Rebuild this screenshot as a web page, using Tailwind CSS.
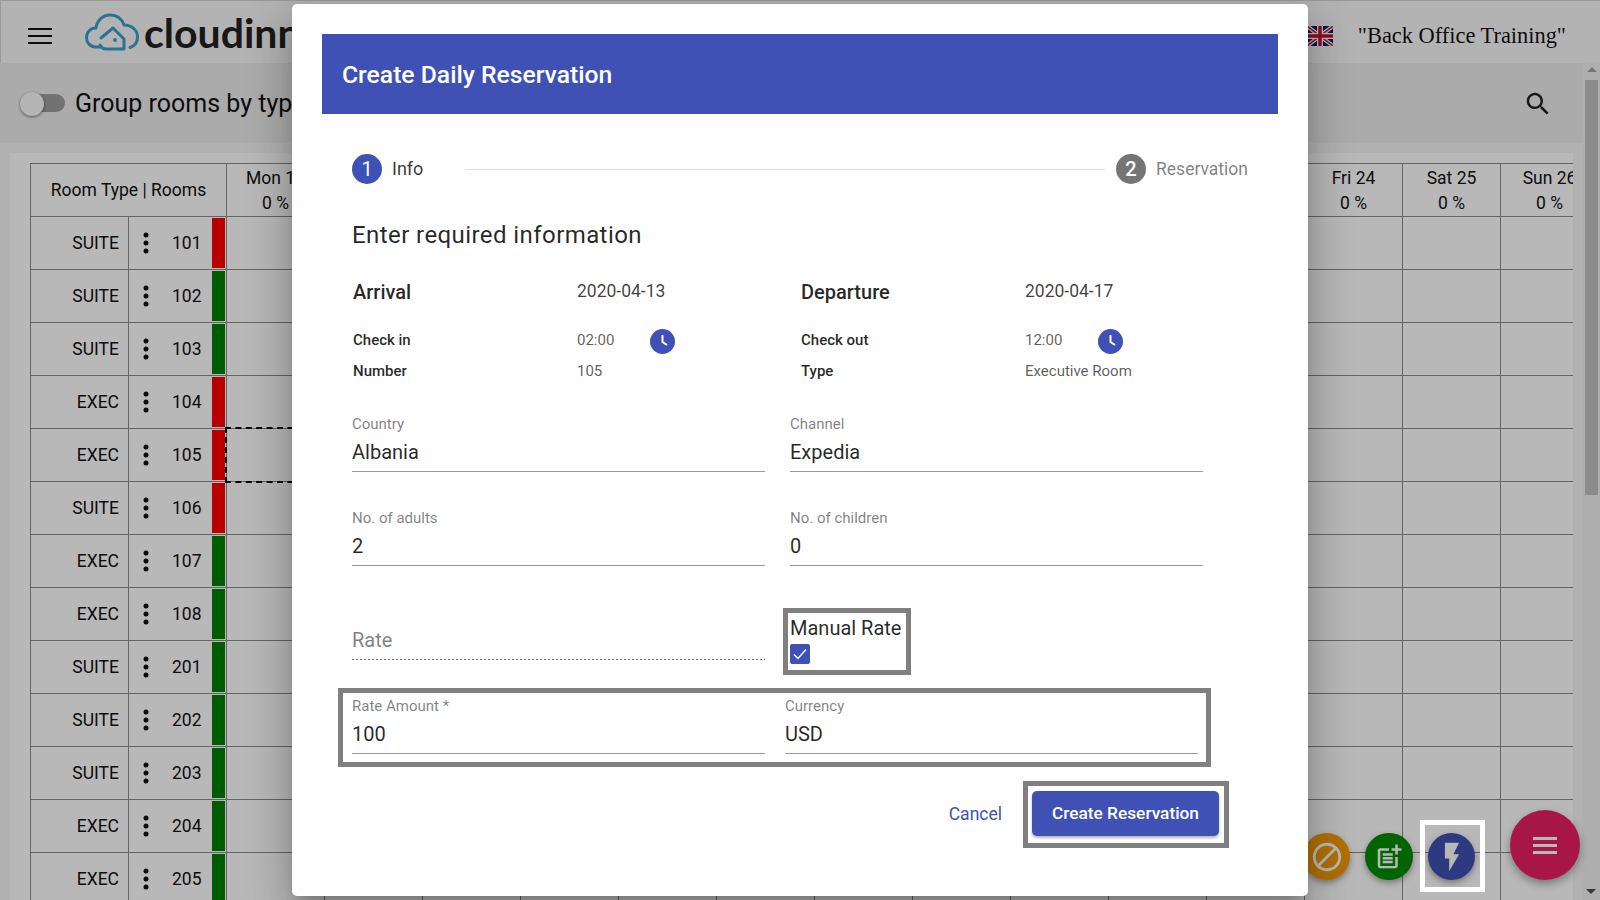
<!DOCTYPE html>
<html lang="en">
<head>
<meta charset="UTF-8">
<title>Cloudinn - Create Daily Reservation</title>
<script src="https://cdn.jsdelivr.net/npm/@tailwindcss/browser@4"></script>
</head>
<body class="relative w-[1600px] h-[900px] overflow-hidden bg-[#f5f5f5] font-['Roboto',sans-serif] text-[#111]">

<!-- top bar -->
<header class="h-[63px] pt-[7px] flex items-center bg-[#f9f9f9] border-t border-l border-[#d4d4d4]">
  <svg class="ml-[27px] w-[24px] h-[16px]" viewBox="0 0 24 16"><path d="M0 1h24M0 8h24M0 15h24" stroke="#111" stroke-width="2.2"/></svg>
  <div class="ml-[33px] -mt-[7px] flex items-center">
    <svg class="w-[54px] h-[38px]" viewBox="0 0 54 38" fill="none" stroke="#3aa0cf" stroke-width="3" stroke-linecap="round" stroke-linejoin="round">
      <path d="M16 34H11C5 34 1.500 29.500 1.500 24.500C1.500 19 5.500 15 11 15C12 7.500 18 2 25 2C32 2 37 6 39 12C46.500 12 52.500 17 52.500 24C52.500 29 49.500 33 45 34.500"/>
      <path d="M16 25L28 15L39 26V36H21C18 36 16 34 15 32"/>
      <circle cx="30" cy="27" r="2" fill="#3aa0cf" stroke="none"/>
    </svg>
    <span class="ml-[5px] font-['Lato',sans-serif] font-bold text-[41px] leading-none text-[#222]">cloudinn</span>
  </div>
  <div class="ml-auto flex items-center mr-[34px]">
    <svg class="w-[26px] h-[20px]" viewBox="0 0 26 20">
      <rect width="26" height="20" fill="#012169"/>
      <path d="M0 0L26 20M26 0L0 20" stroke="#fff" stroke-width="4"/>
      <path d="M0 0L26 20M26 0L0 20" stroke="#c8102e" stroke-width="1.500"/>
      <path d="M13 0V20M0 10H26" stroke="#fff" stroke-width="6"/>
      <path d="M13 0V20M0 10H26" stroke="#c8102e" stroke-width="3.500"/>
    </svg>
    <span class="ml-[25px] mt-[1px] font-['Liberation_Serif',serif] text-[22.4px] leading-none text-[#111]">"Back Office Training"</span>
  </div>
</header>

<div class="flex h-[837px]">
  <main class="w-[1583px]">
    <!-- toolbar -->
    <div class="h-[80px] flex items-center bg-[#eeeeee]">
      <div class="relative ml-[20px] w-[45px] h-[24px] flex items-center">
        <div class="ml-[10px] w-[35px] h-[18px] rounded-full bg-[#9e9e9e]"></div>
        <div class="absolute left-0 top-[1px] w-[24px] h-[24px] rounded-full bg-[#fafafa] shadow-[0_1px_3px_rgba(0,0,0,0.5)]"></div>
      </div>
      <span class="ml-[10px] mt-[1px] text-[25px] leading-none text-[#111]">Group rooms by type</span>
      <svg class="ml-auto mr-[30px] mt-[1px] w-[30px] h-[30px]" viewBox="0 0 24 24" fill="#222"><path d="M15.500 14h-.79l-.28-.27C15.410 12.590 16 11.110 16 9.500 16 5.910 13.090 3 9.500 3S3 5.910 3 9.500 5.910 16 9.500 16c1.610 0 3.090-.59 4.230-1.570l.27.28v.79l5 4.990L20.490 19l-4.990-5zm-6 0C7.010 14 5 11.990 5 9.500S7.010 5 9.500 5 14 7.010 14 9.500 11.990 14 9.500 14z"/></svg>
    </div>
    <!-- planner table -->
    <section class="mt-[10px] ml-[10px] w-[1563px] h-[747px] bg-white pt-[10px] pl-[20px] overflow-hidden">
      <div id="planner" class="w-[1543px] overflow-hidden border-l border-t border-[#8b8b8b] text-[17.5px] leading-[25px]"></div>
    </section>
  </main>
  <!-- scrollbar -->
  <aside class="relative w-[17px] bg-[#f1f1f1]">
    <div class="mx-auto mt-[4px] w-0 h-0 border-x-[5px] border-x-transparent border-b-[5px] border-b-[#a3a3a3]"></div>
    <div class="ml-[2px] mt-[8px] w-[13px] h-[415px] bg-[#c1c1c1]"></div>
    <div class="absolute left-[3px] bottom-[6px] w-0 h-0 border-x-[5px] border-x-transparent border-t-[5px] border-t-[#505050]"></div>
  </aside>
</div>

<!-- speed dial -->
<div class="absolute left-[1303px] top-[810px] w-[277px] h-[70px] flex items-end">
  <button class="w-[47px] h-[47px] flex items-center justify-center rounded-full bg-[#f59c00] shadow-[0_3px_6px_rgba(0,0,0,0.35)]">
    <svg class="w-[34px] h-[34px]" viewBox="0 0 24 24" fill="#fff"><path d="M12 2C6.480 2 2 6.480 2 12s4.480 10 10 10 10-4.480 10-10S17.520 2 12 2zM4 12c0-4.420 3.580-8 8-8 1.850 0 3.550.63 4.900 1.690L5.690 16.900C4.630 15.550 4 13.850 4 12zm8 8c-1.850 0-3.550-.63-4.900-1.690L18.310 7.100C19.370 8.450 20 10.150 20 12c0 4.420-3.580 8-8 8z"/></svg>
  </button>
  <button class="ml-[15px] w-[48px] h-[47px] flex items-center justify-center rounded-full bg-[#008c00] shadow-[0_3px_6px_rgba(0,0,0,0.35)]">
    <svg class="w-[30px] h-[30px]" viewBox="0 0 24 24" fill="#fff"><path d="M17 19.220H5V7h7V5H5c-1.100 0-2 .9-2 2v12c0 1.100.9 2 2 2h12c1.100 0 2-.9 2-2v-7h-2v7.220z"/><path d="M19 2h-2v3h-3c.01.01 0 2 0 2h3v2.990c.01.01 2 0 2 0V7h3V5h-3V2z"/><path d="M7 9h8v2H7zM7 12v2h8v-2zM7 15h8v2H7z"/></svg>
  </button>
  <button class="ml-[15px] w-[47px] h-[47px] flex items-center justify-center rounded-full bg-[#3f51b5] shadow-[0_3px_6px_rgba(0,0,0,0.35)]">
    <svg class="w-[34px] h-[34px]" viewBox="0 0 24 24" fill="#fff"><path d="M7 2v11h3v9l7-12h-4l4-8z"/></svg>
  </button>
  <button class="ml-[35px] w-[70px] h-[70px] flex flex-col items-center justify-center gap-[4px] rounded-full bg-[#e91e63] shadow-[0_4px_8px_rgba(0,0,0,0.35)]">
    <span class="w-[24px] h-[3px] bg-white"></span><span class="w-[24px] h-[3px] bg-white"></span><span class="w-[24px] h-[3px] bg-white"></span>
  </button>
</div>

<!-- backdrop -->
<div class="absolute inset-0 bg-black/28"></div>

<!-- tutorial highlight on the quick action -->
<div class="absolute left-[1420px] top-[820px] w-[65px] h-[72px] border-[5px] border-white"></div>

<!-- dialog -->
<div class="absolute left-[292px] top-[4px] w-[1016px] h-[892px] rounded-[5px] bg-white px-[30px] pt-[30px] shadow-[0_11px_15px_-7px_rgba(0,0,0,0.2),0_24px_38px_3px_rgba(0,0,0,0.14),0_9px_46px_8px_rgba(0,0,0,0.12)] text-black/85">
  <div class="h-[80px] pt-[2px] flex items-center bg-[#3f51b5] pl-[20px] text-[24.7px] font-medium text-white">Create Daily Reservation</div>

  <!-- stepper -->
  <div class="mt-[40px] px-[30px] h-[30px] flex items-center">
    <span class="w-[30px] h-[30px] flex items-center justify-center rounded-full bg-[#3f51b5] text-white text-[20px] leading-none">1</span>
    <span class="ml-[10px] -mt-[1px] text-[18px] leading-none text-black/80">Info</span>
    <div class="flex-1 ml-[43px] mr-[11px] h-px bg-[#e0e0e0]"></div>
    <span class="w-[30px] h-[30px] flex items-center justify-center rounded-full bg-[#757575] text-white text-[20px] leading-none font-medium">2</span>
    <span class="ml-[10px] mt-[1px] text-[17.5px] leading-none text-black/50">Reservation</span>
  </div>

  <h2 class="mt-[35px] ml-[30px] text-[24px] leading-[32px] tracking-[0.42px] text-black/85">Enter required information</h2>

  <!-- stay details -->
  <div class="mt-[25px] ml-[31px] grid grid-cols-[224px_224px_224px_224px]">
    <div class="h-[49px] text-[20px] font-medium leading-[32px]">Arrival</div>
    <div class="h-[49px] text-[17.5px] leading-[30px] text-black/75">2020-04-13</div>
    <div class="h-[49px] text-[20px] font-medium leading-[32px]">Departure</div>
    <div class="h-[49px] text-[17.5px] leading-[30px] text-black/75">2020-04-17</div>

    <div class="h-[31px] text-[15px] font-medium leading-[30px]">Check in</div>
    <div class="h-[31px] flex items-start text-[15px] leading-[30px] text-black/65">
      <span class="w-[73px]">02:00</span>
      <svg class="mt-[4px] w-[25px] h-[25px]" viewBox="0 0 25 25"><circle cx="12.500" cy="12.500" r="12.500" fill="#3f51b5"/><path d="M12.500 6V13L17 16" fill="none" stroke="#fff" stroke-width="2"/></svg>
    </div>
    <div class="h-[31px] text-[15px] font-medium leading-[30px]">Check out</div>
    <div class="h-[31px] flex items-start text-[15px] leading-[30px] text-black/65">
      <span class="w-[73px]">12:00</span>
      <svg class="mt-[4px] w-[25px] h-[25px]" viewBox="0 0 25 25"><circle cx="12.500" cy="12.500" r="12.500" fill="#3f51b5"/><path d="M12.500 6V13L17 16" fill="none" stroke="#fff" stroke-width="2"/></svg>
    </div>

    <div class="h-[30px] text-[15px] font-medium leading-[30px]">Number</div>
    <div class="h-[30px] text-[15px] leading-[30px] text-black/65">105</div>
    <div class="h-[30px] text-[15px] font-medium leading-[30px]">Type</div>
    <div class="h-[30px] text-[15px] leading-[30px] text-black/65">Executive Room</div>
  </div>

  <!-- form fields -->
  <div class="mt-[29px] ml-[30px] grid grid-cols-[413px_413px] gap-x-[25px] gap-y-[37px]">
    <div class="pb-[5px] border-b border-black/40">
      <div class="text-[15px] leading-[18px] text-black/50">Country</div>
      <div class="mt-[5px] text-[20px] leading-[28px]">Albania</div>
    </div>
    <div class="pb-[5px] border-b border-black/40">
      <div class="text-[15px] leading-[18px] text-black/50">Channel</div>
      <div class="mt-[5px] text-[20px] leading-[28px]">Expedia</div>
    </div>
    <div class="pb-[5px] border-b border-black/40">
      <div class="text-[15px] leading-[18px] text-black/50">No. of adults</div>
      <div class="mt-[5px] text-[20px] leading-[28px]">2</div>
    </div>
    <div class="pb-[5px] border-b border-black/40">
      <div class="text-[15px] leading-[18px] text-black/50">No. of children</div>
      <div class="mt-[5px] text-[20px] leading-[28px]">0</div>
    </div>
  </div>

  <div class="mt-[42px] ml-[30px] flex h-[67px]">
    <div class="w-[413px]">
      <div class="pt-[18px] pb-[5px] text-[20px] leading-[28px] text-black/50">Rate</div>
      <div class="h-px bg-[repeating-linear-gradient(to_right,rgba(0,0,0,0.55)_0_2px,transparent_2px_4px)]"></div>
    </div>
    <div class="ml-[18px] w-[128px] h-[67px] border-[5px] border-[#808080] pl-[2px] pt-[1px]">
      <div class="text-[20px] leading-[28px] whitespace-nowrap">Manual Rate</div>
      <div class="mt-[2px] w-[20px] h-[20px] rounded-[2px] bg-[#3f51b5] flex items-center justify-center">
        <svg class="w-[16px] h-[16px]" viewBox="0 0 16 16" fill="none" stroke="#fff" stroke-width="1.500"><path d="M2 8.500L6 12.500L14 3.500"/></svg>
      </div>
    </div>
  </div>

  <div class="mt-[13px] ml-[16px] w-[873px] h-[79px] border-[5px] border-[#808080] pl-[9px] pt-[4px] flex gap-[20px]">
    <div class="w-[413px] h-[57px] pb-[5px] border-b border-black/40">
      <div class="text-[15px] leading-[18px] text-black/50">Rate Amount *</div>
      <div class="mt-[5px] text-[20px] leading-[28px]">100</div>
    </div>
    <div class="w-[413px] h-[57px] pb-[5px] border-b border-black/40">
      <div class="text-[15px] leading-[18px] text-black/50">Currency</div>
      <div class="mt-[5px] text-[20px] leading-[28px]">USD</div>
    </div>
  </div>

  <!-- actions -->
  <div class="mt-[14px] pr-[49px] flex items-center justify-end">
    <span class="mr-[21px] text-[17.5px] text-[#3f51b5]">Cancel</span>
    <div class="w-[206px] h-[67px] border-[5px] border-[#808080] pl-[4px] pt-[5px]">
      <button class="w-[187px] h-[45px] rounded-[5px] bg-[#3f51b5] text-white text-[17.3px] font-medium shadow-[0_2px_3px_rgba(0,0,0,0.3)]">Create Reservation</button>
    </div>
  </div>
</div>

<script>
  // planner grid: 14 visible days, starting Mon 13
  const days = ['Mon 13','Tue 14','Wed 15','Thu 16','Fri 17','Sat 18','Sun 19','Mon 20','Tue 21','Wed 22','Thu 23','Fri 24','Sat 25','Sun 26'];
  const rooms = [
    ['SUITE',101,'bg-[#ff0000]'],['SUITE',102,'bg-[#008000]'],['SUITE',103,'bg-[#008000]'],
    ['EXEC',104,'bg-[#ff0000]'],['EXEC',105,'bg-[#ff0000]'],['SUITE',106,'bg-[#ff0000]'],
    ['EXEC',107,'bg-[#008000]'],['EXEC',108,'bg-[#008000]'],['SUITE',201,'bg-[#008000]'],
    ['SUITE',202,'bg-[#008000]'],['SUITE',203,'bg-[#008000]'],['EXEC',204,'bg-[#008000]'],['EXEC',205,'bg-[#008000]']
  ];
  const dots = '<svg class="w-[6px] h-[22px] shrink-0" viewBox="0 0 6 22" fill="#111"><circle cx="3" cy="3" r="2.500"/><circle cx="3" cy="11" r="2.500"/><circle cx="3" cy="19" r="2.500"/></svg>';

  let html = '<div class="flex w-max h-[53px] border-b border-[#8b8b8b]">'
    + '<div class="w-[196px] flex items-center justify-center border-r border-[#8b8b8b]">Room Type | Rooms</div>';
  days.forEach(d => {
    html += '<div class="w-[98px] pt-[2px] text-center border-r border-[#8b8b8b]"><div>' + d + '</div><div>0 %</div></div>';
  });
  html += '</div>';

  rooms.forEach(r => {
    html += '<div class="flex w-max h-[53px] border-b border-[#8b8b8b]">'
      + '<div class="w-[98px] flex items-center justify-end pr-[9px] border-r border-[#8b8b8b]">' + r[0] + '</div>'
      + '<div class="w-[98px] flex items-center pl-[14px] border-r border-[#8b8b8b]">' + dots
      + '<span class="ml-[23px] w-[33px]">' + r[1] + '</span>'
      + '<div class="ml-[7px] w-[13px] h-[50px] ' + r[2] + '"></div></div>';
    days.forEach((d, i) => {
      const mark = (r[1] === 105 && i === 0)
        ? '<div class="absolute -left-[2px] -top-[2px] w-[110px] h-[56px] border-2 border-dashed border-black"></div>' : '';
      html += '<div class="relative w-[98px] border-r border-[#8b8b8b]">' + mark + '</div>';
    });
    html += '</div>';
  });
  document.getElementById('planner').innerHTML = html;
</script>
</body>
</html>
